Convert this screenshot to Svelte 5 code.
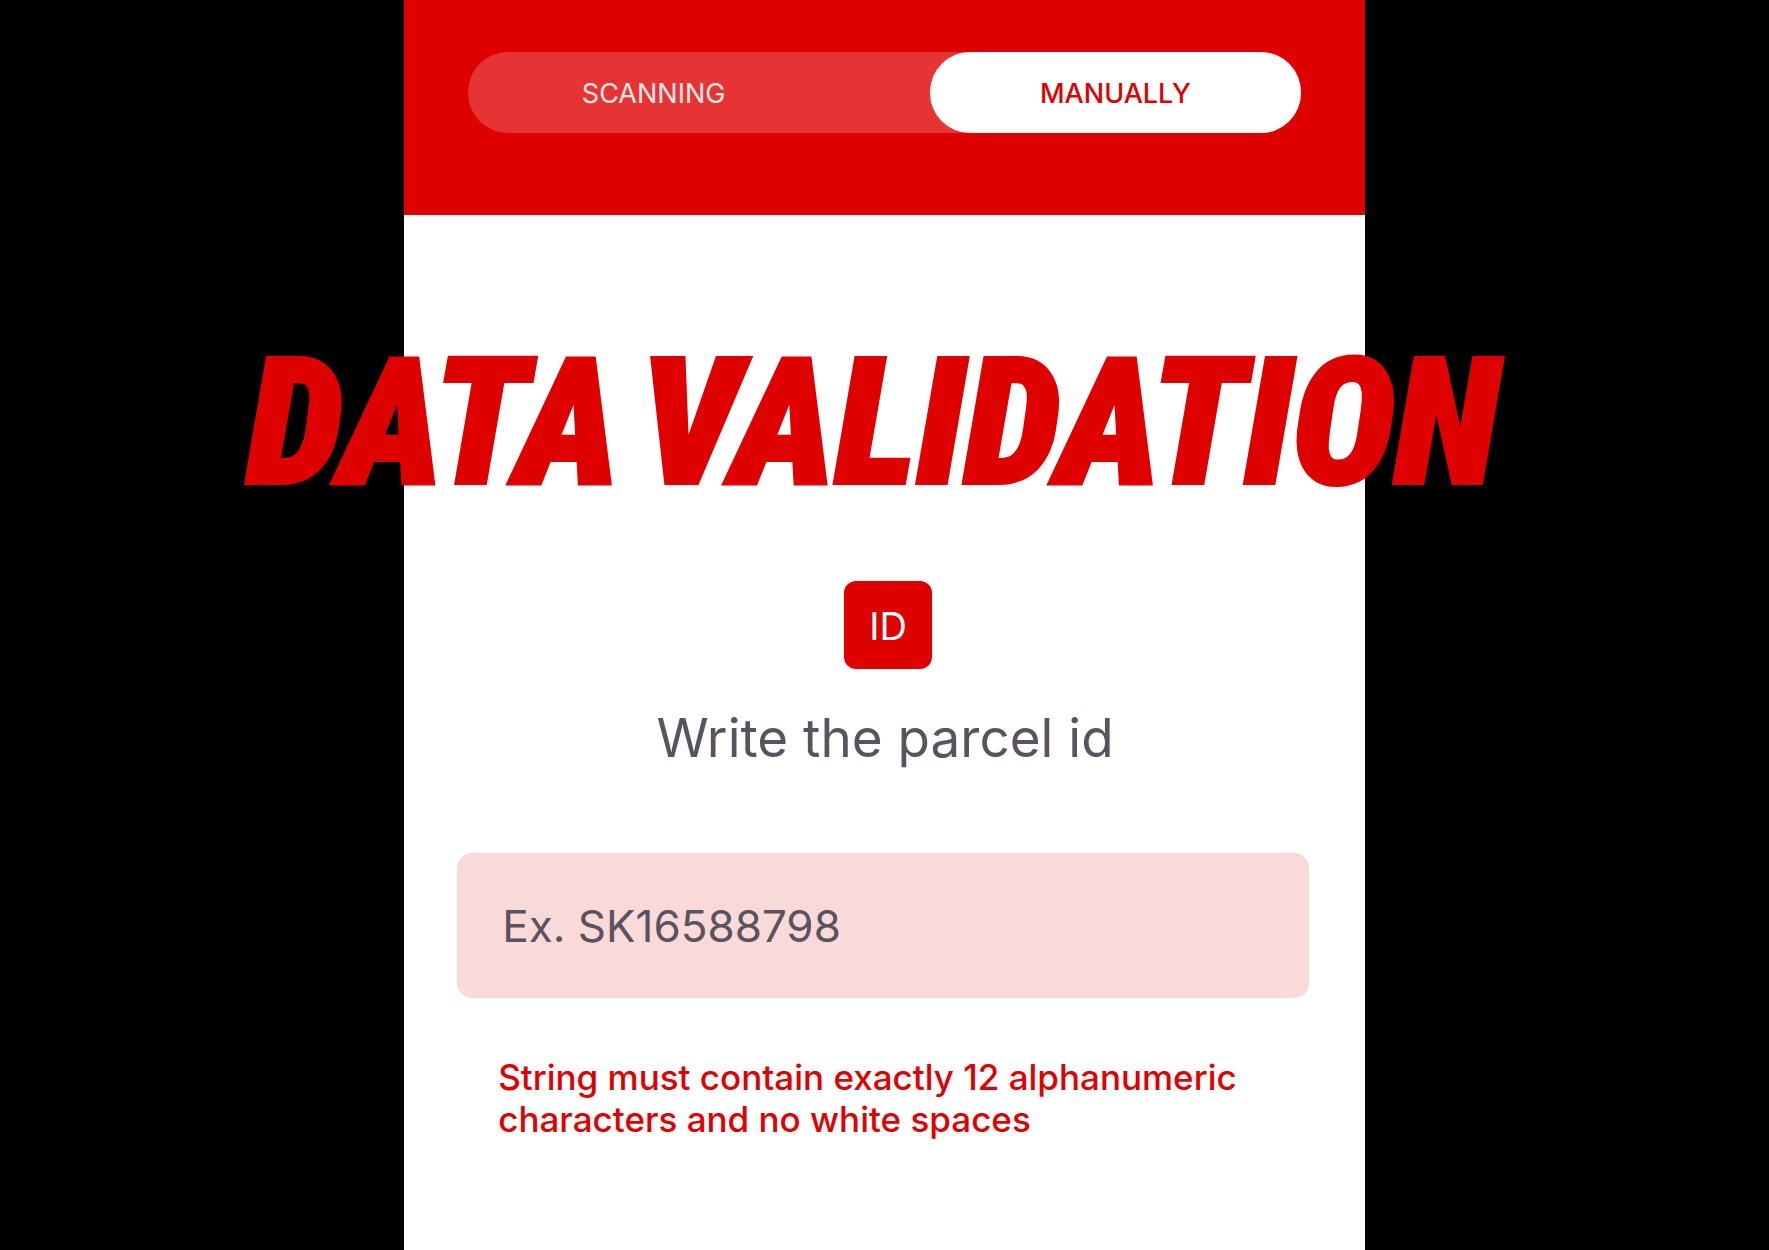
<script>
  let mode = $state('manual');
  let parcelId = $state('');
</script>

<main>
  <section class="screen">
    <header>
      <div class="switch" role="group" aria-label="Input mode">
        <button type="button" class:active={mode === 'scan'} aria-pressed={mode === 'scan'} onclick={() => (mode = 'scan')}>SCANNING</button>
        <button type="button" class:active={mode === 'manual'} aria-pressed={mode === 'manual'} onclick={() => (mode = 'manual')}>MANUALLY</button>
      </div>
    </header>

    <h1><span>DATA</span> <span>VALIDATION</span></h1>

    <form onsubmit={(e) => e.preventDefault()}>
      <span class="badge" aria-hidden="true">ID</span>
      <label for="parcel">Write the parcel id</label>
      <input id="parcel" type="text" placeholder="Ex. SK16588798" aria-describedby="hint" bind:value={parcelId} />
      <p id="hint">String must contain exactly 12 alphanumeric characters and no white spaces</p>
    </form>
  </section>
</main>

<style>
  :global(body) {
    background: #000;
  }
  * {
    box-sizing: border-box;
  }
  main {
    --red: #df0000;
    --ink: #5a535f;
    display: flex;
    justify-content: center;
    min-height: 100vh;
    overflow-x: hidden;
    font-family: Inter, "Liberation Sans", sans-serif;
  }
  .screen {
    display: flex;
    flex-direction: column;
    align-items: center;
    width: 54.3%;
    background: #fff;
  }
  header {
    width: 100%;
    padding: 52px 64px 82px;
    background: var(--red);
  }
  .switch {
    display: grid;
    grid-template-columns: 371fr 91fr 371fr;
    border-radius: 40px;
    background: #e63333;
  }
  button {
    height: 81px;
    padding: 2px 0 0;
    border: 0;
    border-radius: 40px;
    background: transparent;
    color: #fde8e8;
    font: 400 27px/36px Inter, "Liberation Sans", sans-serif;
    cursor: pointer;
  }
  button:last-child {
    grid-column: 3;
  }
  button.active {
    background: #fff;
    color: var(--red);
    font-weight: 500;
  }
  h1 {
    display: flex;
    gap: 20px;
    margin: 119px 24px 0 0;
    color: var(--red);
    font: italic 900 175px/180px "Roboto Condensed", Roboto, sans-serif;
    white-space: nowrap;
    -webkit-text-stroke: 4px var(--red);
  }
  form {
    display: flex;
    flex-direction: column;
    align-items: center;
    width: 100%;
    padding: 67px 56px 64px 53px;
  }
  .badge {
    display: grid;
    place-items: center;
    width: 88px;
    height: 88px;
    margin-left: 10px;
    padding-top: 2px;
    border-radius: 12px;
    background: var(--red);
    color: #fff;
    font-size: 38px;
    line-height: 48px;
  }
  label {
    margin-top: 36px;
    padding-left: 4px;
    color: var(--ink);
    font-size: 53px;
    line-height: 66px;
  }
  input {
    width: 100%;
    height: 145px;
    margin-top: 82px;
    padding: 0 45px;
    border: 0;
    border-radius: 15px;
    background: #f9dad8;
    color: var(--ink);
    font: 400 44px/56px Inter, "Liberation Sans", sans-serif;
  }
  input::placeholder {
    color: var(--ink);
    opacity: 1;
  }
  p {
    width: 100%;
    margin: 58px 0 0;
    padding: 0 41px;
    color: var(--red);
    font-size: 35px;
    font-weight: 500;
    line-height: 42px;
  }
</style>
